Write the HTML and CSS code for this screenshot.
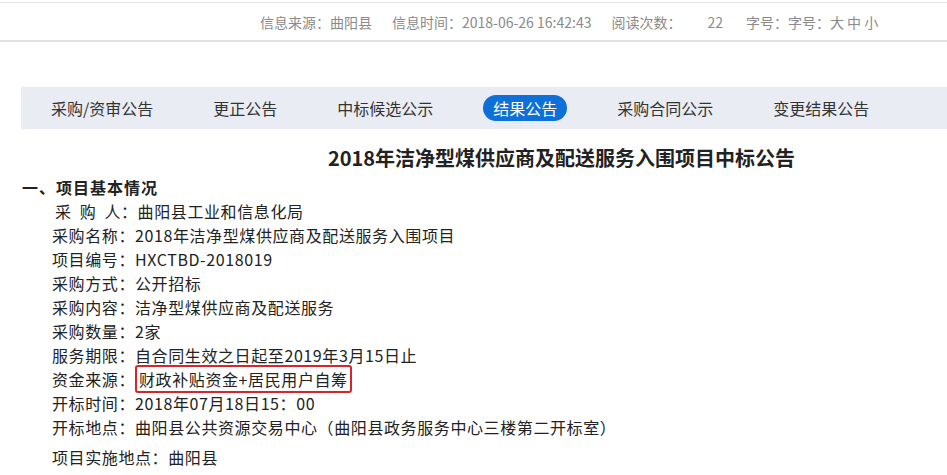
FILE: index.html
```html
<!DOCTYPE html>
<html lang="zh-CN">
<head>
    <meta charset="UTF-8">
    <title>结果公告</title>
    <link rel="stylesheet" href="styles.css">
</head>
<body>
    <div class="meta">
        <span class="meta-item">信息来源：曲阳县</span>
        <span class="meta-item">信息时间：2018-06-26 16:42:43</span>
        <span class="meta-item">阅读次数：</span>
        <span class="meta-item count">22</span>
        <span class="meta-item">字号：字号：大 中 小</span>
    </div>

    <nav class="tabs">
        <a class="tab">采购/资审公告</a>
        <a class="tab">更正公告</a>
        <a class="tab">中标候选公示</a>
        <a class="tab active">结果公告</a>
        <a class="tab">采购合同公示</a>
        <a class="tab">变更结果公告</a>
    </nav>

    <main class="article">
        <h1 class="title">2018年洁净型煤供应商及配送服务入围项目中标公告</h1>
        <h2 class="section">一、项目基本情况</h2>
        <ul class="info">
            <li class="buyer"><span class="wide">采&nbsp;购&nbsp;人</span>：曲阳县工业和信息化局</li>
            <li>采购名称：2018年洁净型煤供应商及配送服务入围项目</li>
            <li>项目编号：HXCTBD-2018019</li>
            <li>采购方式：公开招标</li>
            <li>采购内容：洁净型煤供应商及配送服务</li>
            <li>采购数量：2家</li>
            <li>服务期限：自合同生效之日起至2019年3月15日止</li>
            <li>资金来源：<span class="mark">财政补贴资金+居民用户自筹</span></li>
            <li>开标时间：2018年07月18日15：00</li>
            <li>开标地点：曲阳县公共资源交易中心（曲阳县政务服务中心三楼第二开标室）</li>
            <li class="spaced">项目实施地点：曲阳县</li>
        </ul>
    </main>
</body>
</html>
```

FILE: styles.css
```css
body {
    margin: 0;
    background: #fff;
    color: #222;
    font-family: "Noto Sans CJK SC", "Liberation Sans", sans-serif;
}

.meta {
    margin-top: 2px;
    border-top: 1px solid #e2e2e2;
    border-bottom: 2px solid #e2e2e2;
    height: 37px;
    display: flex;
    align-items: center;
    padding-left: 260px;
    gap: 20px;
    font-size: 14px;
    color: #8a8a8a;
}
.meta .count { margin-left: 6px; margin-right: 3px; }

.tabs {
    margin: 45px 0 0 21px;
    height: 42px;
    background: #e9edf3;
    display: flex;
    align-items: center;
    gap: 40px;
    padding-left: 20px;
}
.tab {
    font-size: 16px;
    color: #333;
    padding: 0 10px;
    line-height: 26px;
    border-radius: 13px;
}
.tab.active {
    background: #0d6fd8;
    color: #fff;
}

.article { padding-left: 22px; }

.title {
    margin: 16px 0 0 154px;
    text-align: center;
    font-size: 20px;
    font-weight: bold;
    color: #222;
    line-height: 26px;
}

.section {
    margin: 3px 0 0;
    font-size: 16px;
    letter-spacing: 1px;
    font-weight: bold;
    line-height: 26px;
}

.info {
    list-style: none;
    margin: -1px 0 0;
    padding-left: 30px;
    font-size: 16px;
    line-height: 24px;
    letter-spacing: 0.6px;
}
.info .wide {
    display: inline-block;
    width: 66px;
    padding-left: 3px;
    text-align-last: justify;
}
.info .spaced { margin-top: 6px; }

.mark {
    border: 2px solid #d4262b;
    border-radius: 3px;
    padding: 0 2px;
}
```
